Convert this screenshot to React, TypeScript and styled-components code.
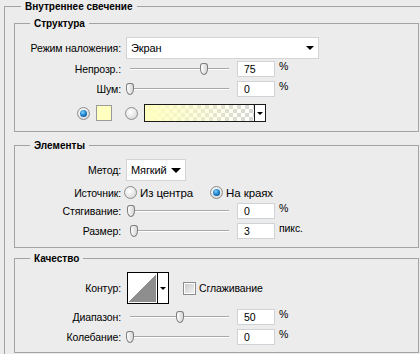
import styled, { createGlobalStyle } from 'styled-components';

const GlobalStyle = createGlobalStyle`
  html, body {
    margin: 0;
    padding: 0;
    background: #ececec;
    overflow: hidden;
  }
  body {
    font-family: 'Liberation Sans', Arial, sans-serif;
    font-size: 10.5px;
    letter-spacing: -0.1px;
    color: #000;
  }
`;

const App = () => {
  return (
    <>
      <GlobalStyle />
      <Outer>
        <Title $offset={7}>Внутреннее свечение</Title>
        <Group $mt={2}>
          <Title $offset={15}>Структура</Title>
          <Body $pb={9}>
            <Row $h={22} $mt={0}>
              <Label>Режим наложения:</Label>
              <Select $w={193}>
                Экран
                <Arrow $size={4} />
              </Select>
            </Row>
            <SliderRow label='Непрозр.:' pos={74} value='75' unit='%' mt={2} />
            <SliderRow label='Шум:' pos={0} value='0' unit='%' mt={4} />
            <ColorRow>
              <Radio $on />
              <Swatch />
              <Radio $space={13} />
              <GradientBox>
                <GradientFill />
                <SmallDrop>
                  <Arrow $size={3} />
                </SmallDrop>
              </GradientBox>
            </ColorRow>
          </Body>
        </Group>

        <Group $mt={7}>
          <Title $offset={15}>Элементы</Title>
          <Body $pb={8}>
            <Row $h={22} $mt={0}>
              <Label>Метод:</Label>
              <Select $w={60}>
                Мягкий
                <Arrow $size={5} />
              </Select>
            </Row>
            <Row $h={13} $mt={5}>
              <Label>Источник:</Label>
              <Choices>
                <Choice>
                  <Radio />
                  Из центра
                </Choice>
                <Choice>
                  <Radio $on />
                  На краях
                </Choice>
              </Choices>
            </Row>
            <SliderRow label='Стягивание:' pos={1} value='0' unit='%' mt={4} />
            <SliderRow label='Размер:' pos={4} value='3' unit='пикс.' mt={4} />
          </Body>
        </Group>

        <Group $mt={4}>
          <Title $offset={15}>Качество</Title>
          <Body $pb={7}>
            <Row $h={32} $mt={0}>
              <Label>Контур:</Label>
              <ContourLine>
                <Contour>
                  <ContourPreview />
                  <ContourDrop>
                    <Arrow $size={3} />
                  </ContourDrop>
                </Contour>
                <Check>
                  <Box />
                  Сглаживание
                </Check>
              </ContourLine>
            </Row>
            <SliderRow label='Диапазон:' pos={50} value='50' unit='%' mt={5} />
            <SliderRow label='Колебание:' pos={0} value='0' unit='%' mt={4} />
          </Body>
        </Group>
      </Outer>
    </>
  );
};

interface ISliderRowProps {
  label: string;
  pos: number;
  value: string;
  unit: string;
  mt: number;
}

const SliderRow = ({ label, pos, value, unit, mt }: ISliderRowProps) => {
  return (
    <Row $h={16} $mt={mt}>
      <Label>{label}</Label>
      <Controls>
        <Slider>
          <Track />
          <Thumb style={{ left: pos }} />
        </Slider>
        <NumberBox>{value}</NumberBox>
        <Unit>{unit}</Unit>
      </Controls>
    </Row>
  );
};

export default App;

const Outer = styled.fieldset`
  box-sizing: border-box;
  margin: 0 0 0 4px;
  padding: 2px 0 30px 9px;
  width: 440px;
  min-width: 0;
  border: 1px solid #a3a3a3;
`;

const Title = styled.legend<{ $offset: number }>`
  margin-left: ${(p) => p.$offset}px;
  padding: 0 4px;
  font-weight: bold;
  font-size: 10px;
  letter-spacing: 0;
  line-height: 13px;
`;

const Group = styled.fieldset<{ $mt: number }>`
  box-sizing: border-box;
  width: 405px;
  min-width: 0;
  margin: ${(p) => p.$mt}px 0 0 0;
  padding: 0;
  border: 1px solid #a3a3a3;
`;

const Body = styled.div<{ $pb: number }>`
  display: flex;
  flex-direction: column;
  padding: 7px 0 ${(p) => p.$pb}px;
`;

const Row = styled.div<{ $h: number; $mt: number }>`
  display: grid;
  grid-template-columns: 106px 1fr;
  column-gap: 5px;
  align-items: center;
  height: ${(p) => p.$h}px;
  margin-top: ${(p) => p.$mt}px;
`;

const Label = styled.div`
  text-align: right;
  white-space: nowrap;
`;

const Select = styled.div<{ $w: number }>`
  box-sizing: border-box;
  display: flex;
  align-items: center;
  justify-content: space-between;
  width: ${(p) => p.$w}px;
  height: 22px;
  padding: 0 4px 0 4px;
  background: #fff;
  border: 1px solid #d4d4d4;
  font-size: 11px;
`;

const Arrow = styled.span<{ $size: number }>`
  width: 0;
  height: 0;
  border-left: ${(p) => p.$size}px solid transparent;
  border-right: ${(p) => p.$size}px solid transparent;
  border-top: ${(p) => p.$size}px solid #000;
`;

const Controls = styled.div`
  display: flex;
  align-items: center;
  height: 16px;
`;

const Slider = styled.div`
  position: relative;
  width: 103px;
  height: 16px;
`;

const Track = styled.div`
  position: absolute;
  left: 4px;
  right: 0;
  top: 7px;
  height: 1px;
  background: #a8a8a8;
  border-bottom: 1px solid #fff;
`;

const Thumb = styled.div`
  position: absolute;
  top: 2px;
  box-sizing: border-box;
  width: 8px;
  height: 12px;
  border: 1px solid #7d7d7d;
  border-radius: 3px 3px 4px 4px / 3px 3px 6px 6px;
  background: linear-gradient(to right, #fdfdfd, #d6d6d6);
`;

const NumberBox = styled.div`
  box-sizing: border-box;
  margin-left: 8px;
  width: 38px;
  height: 16px;
  padding: 0 0 0 6px;
  line-height: 14px;
  background: #fff;
  border: 1px solid #cfd3d8;
`;

const Unit = styled.span`
  margin-left: 4px;
  align-self: flex-start;
  line-height: 11px;
`;

const ColorRow = styled.div`
  display: flex;
  align-items: center;
  height: 18px;
  margin-top: 7px;
  padding-left: 62px;
`;

const Radio = styled.span<{ $on?: boolean; $space?: number }>`
  position: relative;
  box-sizing: border-box;
  flex: none;
  width: 13px;
  height: 13px;
  margin-left: ${(p) => p.$space ?? 0}px;
  border: 1px solid #8c8c8c;
  border-radius: 50%;
  background: radial-gradient(circle at 40% 35%, #ffffff 0%, #e4e4e4 60%, #c4c4c4 100%);

  &::after {
    content: '';
    display: ${(p) => (p.$on ? 'block' : 'none')};
    position: absolute;
    left: 2px;
    top: 2px;
    width: 7px;
    height: 7px;
    border-radius: 50%;
    background: radial-gradient(circle at 40% 35%, #7fd0ff 0%, #1a7fc8 50%, #063a66 100%);
  }
`;

const Swatch = styled.span`
  box-sizing: border-box;
  width: 16px;
  height: 16px;
  margin-left: 6px;
  background: #ffffc0;
  border: 1px solid #9a9a9a;
`;

const GradientBox = styled.div`
  box-sizing: border-box;
  display: flex;
  width: 122px;
  height: 18px;
  margin-left: 6px;
  border: 1px solid #1a1a1a;
`;

const GradientFill = styled.div`
  flex: 1;
  background:
    linear-gradient(to right, #ffffc0, rgba(255, 255, 192, 0)),
    repeating-conic-gradient(#d6d6d6 0% 25%, #ffffff 0% 50%) 0 0 / 8px 8px;
`;

const SmallDrop = styled.div`
  display: flex;
  align-items: center;
  justify-content: center;
  width: 10px;
  background: #fff;
  border-left: 1px solid #1a1a1a;
`;

const Choices = styled.div`
  display: flex;
  align-items: center;
  gap: 17px;
  margin-left: -2px;
`;

const Choice = styled.label`
  display: flex;
  align-items: center;
  gap: 3px;
  font-size: 11.5px;
`;

const ContourLine = styled.div`
  display: flex;
  align-items: center;
  margin-left: 1px;
`;

const Contour = styled.div`
  box-sizing: border-box;
  display: flex;
  width: 42px;
  height: 32px;
  border: 1px solid #000;
`;

const ContourPreview = styled.div`
  flex: 1;
  background: linear-gradient(to top left, #8e8e8e 50%, #ffffff 50%);
  border: 1px solid #fff;
`;

const ContourDrop = styled.div`
  display: flex;
  align-items: center;
  justify-content: center;
  width: 10px;
  background: #fff;
  border-left: 1px solid #000;
`;

const Check = styled.label`
  display: flex;
  align-items: center;
  gap: 3px;
  margin-left: 14px;
`;

const Box = styled.span`
  box-sizing: border-box;
  width: 13px;
  height: 13px;
  border: 1px solid #8c8c8c;
  background: linear-gradient(135deg, #c8c8c8, #f4f4f4);
  box-shadow: inset 0 0 0 1px #fff;
`;
